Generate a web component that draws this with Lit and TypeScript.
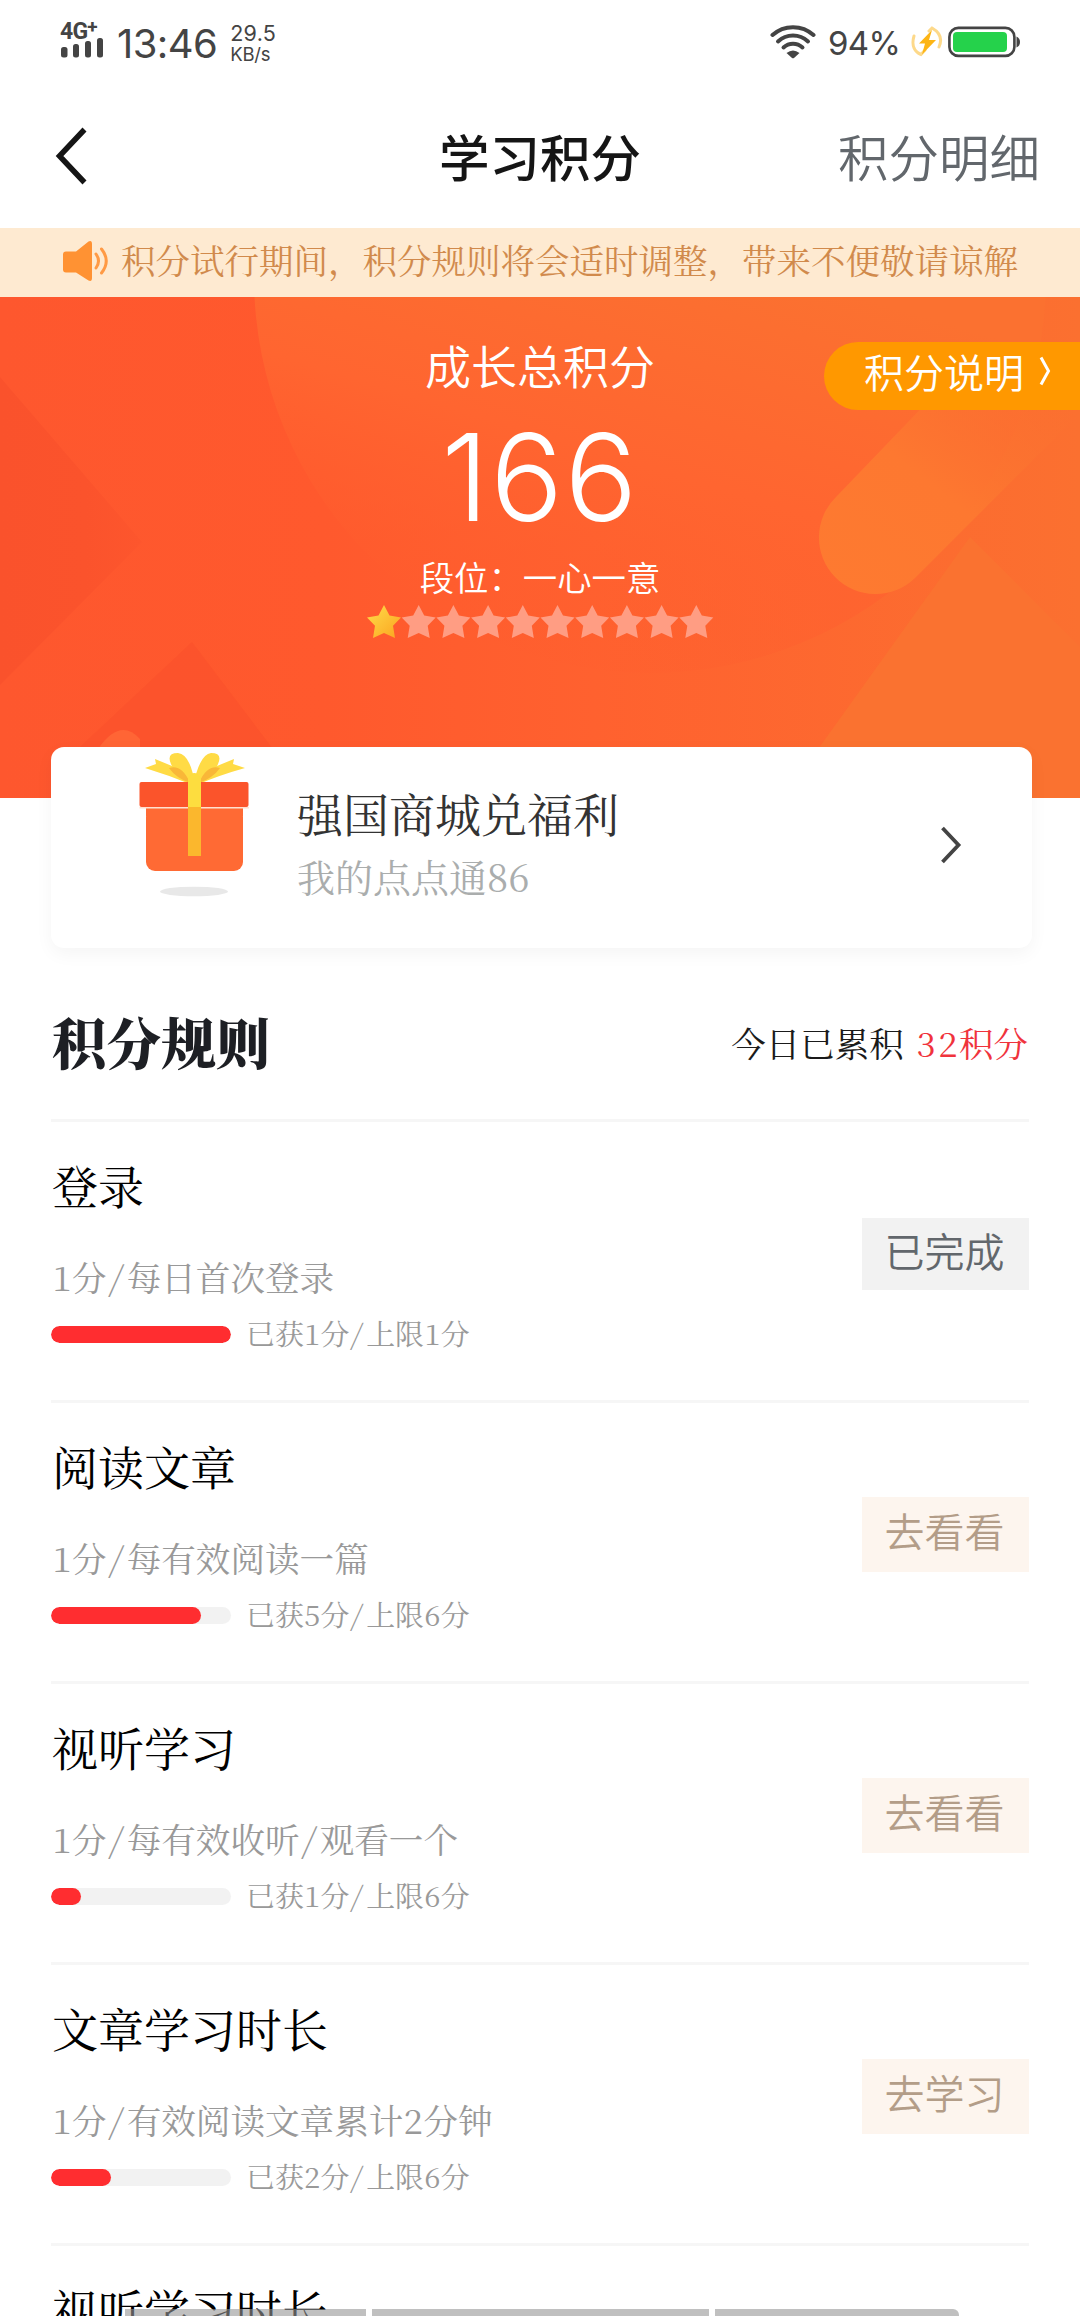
import { LitElement, html, css, svg, nothing } from "lit";
import { customElement, property } from "lit/decorators.js";

interface Task {
  title: string;
  rule?: string;
  got?: number;
  limit?: number;
  action?: string;
  done?: boolean;
}

const TASKS: Task[] = [
  { title: "登录", rule: "1分/每日首次登录", got: 1, limit: 1, action: "已完成", done: true },
  { title: "阅读文章", rule: "1分/每有效阅读一篇", got: 5, limit: 6, action: "去看看" },
  { title: "视听学习", rule: "1分/每有效收听/观看一个", got: 1, limit: 6, action: "去看看" },
  { title: "文章学习时长", rule: "1分/有效阅读文章累计2分钟", got: 2, limit: 6, action: "去学习" },
  { title: "视听学习时长" },
];

const SANS = css`"Noto Sans CJK SC", "Noto Sans", sans-serif`;
const SERIF = css`"Noto Serif CJK SC", "Noto Serif SC", "Source Han Serif SC", "Noto Sans CJK SC", serif`;

/* Digits and slashes sit in equal-width cells so that the lines align. */
const cells = (text: string) =>
  text.split(/([0-9/])/).map((part) =>
    /^[0-9/]$/.test(part) ? html`<span class="cell ${part === "/" ? "slash" : ""}">${part}</span>` : part
  );

@customElement("status-bar")
export class StatusBar extends LitElement {
  static styles = css`
    :host { display: flex; height: 84px; justify-content: space-between; box-sizing: border-box; padding: 0 60px; color: #444; font-family: Roboto, sans-serif; }
    .left, .right { display: flex; align-items: flex-start; }
    .signal { display: flex; flex-direction: column; width: 43px; margin-top: 20px; }
    .net { font: 700 23px/23px Roboto, sans-serif; letter-spacing: -0.800px; height: 18px; display: flex; }
    .plus { font-size: 19px; line-height: 13px; }
    .time { font: 400 40px/40px Inter, sans-serif; letter-spacing: -0.600px; margin: 24px 0 0 14px; }
    .speed { display: flex; flex-direction: column; margin: 22px 0 0 13px; font: 400 21.500px/22px Inter, sans-serif; letter-spacing: 0.300px; }
    .unit { font-size: 18.500px; line-height: 20px; letter-spacing: -0.200px; }
    .pct { font: 400 33px/40px Inter, sans-serif; letter-spacing: -0.600px; margin: 23px 0 0 12px; width: 71px; }
    .wifi { margin-top: 23px; }
    .bolt { margin: 26px 0 0 12px; }
    .batt { margin: 26px 0 0 5px; }
  `;
  render() {
    return html`
      <div class="left">
        <div class="signal">
          <div class="net">4G<span class="plus">+</span></div>
          <svg width="43" height="20" viewBox="0 0 43 20">
            <g fill="#444"><rect x="1" y="9" width="6.500" height="10.500" rx="2.500" /><rect x="13" y="6" width="6" height="13.500" rx="2.500" /><rect x="25" y="3" width="6" height="16.500" rx="2.500" /><rect x="37" y="0" width="6" height="19.500" rx="2.500" /></g>
          </svg>
        </div>
        <div class="time">13:46</div>
        <div class="speed"><span>29.5</span><span class="unit">KB/s</span></div>
      </div>
      <div class="right">
        <svg class="wifi" width="46" height="36" viewBox="0 0 46 36">
          <g fill="none" stroke="#444" stroke-width="4" stroke-linecap="round"><path d="M2.500 12C14 1.500 32 1.500 43.500 12" /><path d="M8 18.500C16.500 10.500 29.500 10.500 38 18.500" /><path d="M13.500 24.500C19 19.500 27 19.500 32.500 24.500" /></g>
          <path d="M16.500 30Q23 25 29.500 30L24 35Q23 35.700 22 35Z" fill="#444" />
        </svg>
        <div class="pct">94%</div>
        <svg class="bolt" width="32" height="32" viewBox="0 0 32 32">
          <g fill="none" stroke="#fdd98a" stroke-width="3" stroke-linecap="round"><path d="M3 10C0 20 4 26 10 28.500L14 24" /><path d="M28 21C32 12 28 6 21 2L18 5" /></g>
          <path d="M21 4L8 17.500H14L11 28.500L25 14H18Z" fill="#fdb515" />
        </svg>
        <svg class="batt" width="72" height="32" viewBox="0 0 72 32">
          <rect x="1.400" y="1.900" width="65" height="28" rx="9" fill="#fff" stroke="#444" stroke-width="2.600" />
          <rect x="5" y="6" width="54" height="20" rx="4" fill="#25d24b" />
          <path d="M68.500 10.500Q72 12 72 16T68.500 21.500Z" fill="#444" />
        </svg>
      </div>
    `;
  }
}

@customElement("score-hero")
export class ScoreHero extends LitElement {
  static styles = css`
    :host { display: grid; height: 501px; color: #fff; font-family: ${SANS}; }
    .bg, .body { grid-area: 1 / 1; }
    .bg { display: block; }
    .body { display: flex; flex-direction: column; align-items: center; position: relative; }
    .label { font-size: 46px; font-weight: 350; line-height: 60px; margin-top: 37px; }
    .total { font-family: Inter, sans-serif; font-size: 121px; font-weight: 350; line-height: 124px; letter-spacing: 1.500px; margin-top: 21px; }
    .rank { font-size: 34.400px; font-weight: 350; line-height: 44px; margin-top: 15px; }
    .stars { display: block; margin-top: 7px; }
    .pill { position: absolute; top: 45px; right: 0; width: 256px; height: 68px; box-sizing: border-box; padding: 0 29px 10px 40px; border-radius: 34px 0 0 34px; background: #ff9800; display: flex; align-items: center; justify-content: space-between; font-size: 40px; font-weight: 350; line-height: 58px; }
  `;
  private star(i: number) {
    return svg`<path transform=${`translate(${i * 34.7} 0)`} d="M17 0L22.500 10.500L34 12.600L26 20.800L28 33L17 28L6 33L8 20.800L0 12.600L11.500 10.500Z" fill=${i === 0 ? "url(#gold)" : "#ff9d83"} />`;
  }
  render() {
    return html`
      <svg class="bg" width="1080" height="501" viewBox="0 0 1080 501">
        <defs>
          <linearGradient id="base" x1="0" y1="0" x2="1" y2="0"><stop offset="0" stop-color="#fe572e" /><stop offset="0.300" stop-color="#ff592d" /><stop offset="0.550" stop-color="#ff612f" /><stop offset="1" stop-color="#fb7030" /></linearGradient>
          <linearGradient id="disc" x1="0.650" y1="0" x2="0.350" y2="1"><stop offset="0.450" stop-color="#fb7130" /><stop offset="0.720" stop-color="#ff6530" /><stop offset="1" stop-color="#ff5a2d" stop-opacity="0" /></linearGradient>
          <linearGradient id="cap" x1="0" y1="1" x2="1" y2="0"><stop offset="0" stop-color="#fe7a30" /><stop offset="0.500" stop-color="#fd7830" /><stop offset="1" stop-color="#fa7230" stop-opacity="0" /></linearGradient>
          <linearGradient id="wedge" x1="0" y1="0" x2="1" y2="0"><stop offset="0" stop-color="#fa522c" /><stop offset="0.600" stop-color="#fb532c" /><stop offset="1" stop-color="#fd562d" /></linearGradient>
        </defs>
        <rect width="1080" height="501" fill="url(#base)" />
        <path d="M0 80L142 245L0 388Z" fill="url(#wedge)" />
        <path d="M192 345L80 450V501H310Z" fill="#fb532c" opacity="0.800" />
        <circle cx="650" cy="-20" r="396" fill="url(#disc)" />
        <path d="M970 240L1080 350V501H783Z" fill="#fa7230" />
        <path d="M932 100L836 200A56 56 0 0 0 915 281L1070 126V100Z" fill="url(#cap)" />
        <path d="M98 452Q120 420 140 442V470H90Z" fill="#ff6535" />
      </svg>
      <div class="body">
        <div class="label">成长总积分</div>
        <div class="total">166</div>
        <div class="rank">段位：一心一意</div>
        <svg class="stars" width="347" height="34" viewBox="0 0 347 34">
          <defs><linearGradient id="gold" x1="0" y1="0" x2="1" y2="1"><stop offset="0" stop-color="#ffdc4a" /><stop offset="1" stop-color="#fba41f" /></linearGradient></defs>
          ${Array.from({ length: 10 }, (_, i) => this.star(i))}
        </svg>
        <div class="pill">积分说明
          <svg width="12" height="30" viewBox="0 0 12 30"><path d="M2 1.500L9.500 15L2 28.500" fill="none" stroke="#fff" stroke-width="3" /></svg>
        </div>
      </div>
    `;
  }
}

@customElement("task-row")
export class TaskRow extends LitElement {
  @property({ attribute: false }) task!: Task;
  static styles = css`
    :host { display: flex; justify-content: space-between; height: 281px; box-sizing: border-box; border-top: 3px solid #f6f6f6; font-family: ${SERIF}; }
    .title { font-size: 46px; line-height: 60px; color: #000; margin: 32px 0 0 1px; white-space: nowrap; }
    .rule { font-size: 34.600px; line-height: 44px; color: #999; margin: 40px 0 0 1px; white-space: nowrap; }
    .cell { display: inline-block; width: 0.580em; text-align: center; }
    .slash { transform: skewX(-8deg); }
    .progress { display: flex; align-items: center; gap: 15px; height: 40px; margin-top: 16px; }
    .track { width: 180px; height: 17px; border-radius: 9px; background: #f2f2f2; overflow: hidden; }
    .fill { height: 100%; border-radius: 9px; background: #ff2d30; }
    .count { font-size: 28.900px; line-height: 36px; padding-bottom: 3px; color: #999; white-space: nowrap; }
    .action { width: 167px; height: 75px; margin-top: 94px; box-sizing: border-box; background: #fdf5ee; color: #b39d88; font: 350 40px/66px ${SANS}; text-align: center; padding-right: 2px; }
    .done { background: #f2f2f2; color: #62676c; height: 72px; margin-top: 96px; line-height: 64px; }
  `;
  render() {
    const t = this.task;
    return html`
      <div>
        <div class="title">${t.title}</div>
        ${t.rule
          ? html`<div class="rule">${cells(t.rule)}</div>
              <div class="progress">
                <div class="track"><div class="fill" style="width:${(t.got! / t.limit!) * 100}%"></div></div>
                <div class="count">${cells(`已获${t.got}分/上限${t.limit}分`)}</div>
              </div>`
          : nothing}
      </div>
      ${t.action ? html`<div class="action ${t.done ? "done" : ""}">${t.action}</div>` : nothing}
    `;
  }
}

@customElement("app-root")
export class AppRoot extends LitElement {
  static styles = css`
    :host { display: block; position: relative; width: 1080px; height: 2316px; overflow: hidden; background: #fff; font-family: ${SERIF}; }
    .nav { display: grid; grid-template-columns: 1fr auto 1fr; align-items: center; height: 144px; box-sizing: border-box; padding: 0 40px 0 54px; font-family: ${SANS}; font-size: 50.500px; line-height: 60px; }
    .nav-title { font-weight: 500; color: #151515; padding-bottom: 3px; margin: 0 13px 0 -1px; }
    .detail { justify-self: end; font-weight: 350; color: #62676c; padding-bottom: 3px; }
    .notice { display: flex; align-items: center; height: 69px; box-sizing: border-box; padding: 0 0 3px 62px; gap: 13px; background: #feead1; color: #d18a4c; font-size: 34.500px; line-height: 57px; white-space: nowrap; }
    .notice span { padding-bottom: 3px; }
    .card { position: relative; display: flex; align-items: flex-start; height: 201px; width: 981px; margin: -51px 0 0 51px; box-sizing: border-box; padding: 0 69px 0 84px; border-radius: 13px; background: #fff; box-shadow: 0 6px 18px rgba(0, 0, 0, 0.045); }
    .shop { flex: 1; margin: 35px 0 0 48px; }
    .shop-title { font-size: 46px; line-height: 60px; color: #333; }
    .shop-sub { font-size: 38px; line-height: 50px; color: #aaadad; margin-top: 9px; }
    .gift { margin-top: 4px; }
    .go { margin-top: 79px; }
    .head { display: flex; justify-content: space-between; align-items: center; height: 171px; box-sizing: border-box; padding: 14px 52px 0 52px; }
    h2 { margin: 0; font-size: 54.500px; line-height: 70px; font-weight: 900; color: #1d1f24; }
    .today { font-size: 34.500px; line-height: 44px; color: #1a1a1a; padding-top: 2px; }
    .red { color: #f0333c; margin-left: 11px; }
    .cell { display: inline-block; width: 0.640em; text-align: center; }
    .list { padding: 0 51px; }
    .home { position: absolute; left: 125px; bottom: 0; display: flex; gap: 6px; }
    .seg { height: 7px; width: 241px; background: rgba(150, 150, 150, 0.600); }
    .mid { width: 337px; }
    .end { width: 244px; border-radius: 0 6px 0 0; }
  `;
  render() {
    return html`
      <status-bar></status-bar>
      <div class="nav">
        <svg width="34" height="60" viewBox="0 0 34 60"><path d="M30.500 3.500L5.500 30L30.500 56.500" fill="none" stroke="#151515" stroke-width="5.500" /></svg>
        <div class="nav-title">学习积分</div>
        <div class="detail">积分明细</div>
      </div>
      <div class="notice">
        <svg width="46" height="42" viewBox="0 0 46 42">
          <path d="M4 11.500H14L26.500 1.500Q30 0 30 4V38Q30 42 26.500 40.500L14 32.500H4Q1 32.500 1 29.500V14.500Q1 11.500 4 11.500Z" fill="#ff9233" />
          <g fill="none" stroke="#ff9a45" stroke-width="3" stroke-linecap="round"><path d="M34 14Q39 21 34 28" /><path d="M39.500 9Q49 21 39.500 33" /></g>
        </svg>
        <span>积分试行期间，积分规则将会适时调整，带来不便敬请谅解</span>
      </div>
      <score-hero></score-hero>
      <div class="card">
        <svg class="gift" width="114" height="148" viewBox="135 751 114 148">
          <path d="M190 784Q168 775 145 768L156 764L155 759L172 766Q165 753 178 753Q188 754 193 774Z" fill="#ffdb45" />
          <path d="M199 784Q220 775 245 768L233 764L234 759L217 766Q224 753 211 753Q202 754 196 774Z" fill="#ffdb45" />
          <path d="M169 768Q182 764 190 783Q176 778 169 768ZM220 768Q207 764 199 783Q213 778 220 768Z" fill="#f9b738" />
          <rect x="146" y="808" width="97" height="63" rx="9" fill="#ff6a34" />
          <path d="M146 808H243V816H146Z" fill="#ff6a34" />
          <rect x="139.500" y="782" width="109" height="25" rx="2" fill="#fb542b" />
          <path d="M139.500 807.700H249" stroke="#ffe0d0" stroke-width="1.500" />
          <path d="M188 778Q194 768 201 778V807H188Z" fill="#fddd3f" />
          <rect x="188" y="807" width="13" height="49" fill="#fbb72d" />
          <ellipse cx="194" cy="891.500" rx="34" ry="4.800" fill="#e8e8e8" />
        </svg>
        <div class="shop">
          <div class="shop-title">强国商城兑福利</div>
          <div class="shop-sub">我的点点通86</div>
        </div>
        <svg class="go" width="24" height="38" viewBox="0 0 24 38"><path d="M3.500 2L19.500 19L3.500 36" fill="none" stroke="#444" stroke-width="3.800" /></svg>
      </div>
      <div class="head">
        <h2>积分规则</h2>
        <div class="today">今日已累积<span class="red">${cells("32积分")}</span></div>
      </div>
      <div class="list">${TASKS.map((t) => html`<task-row .task=${t}></task-row>`)}</div>
      <div class="home"><div class="seg"></div><div class="seg mid"></div><div class="seg end"></div></div>
    `;
  }
}
